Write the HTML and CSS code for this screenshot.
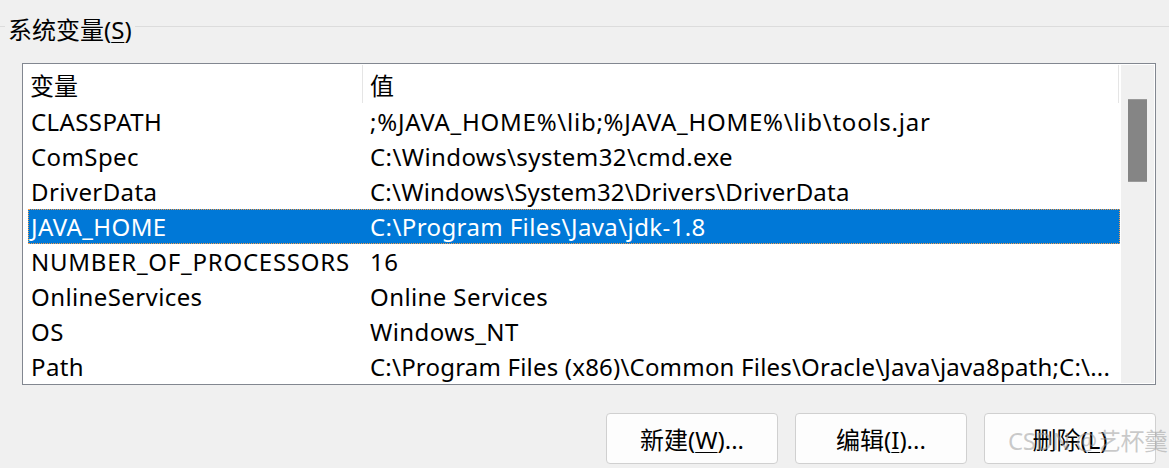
FILE: index.html
```html
<!DOCTYPE html>
<html lang="zh-CN">
<head>
<meta charset="utf-8">
<title>系统变量</title>
<link rel="stylesheet" href="styles.css">
</head>
<body>
<div class="page">
  <div class="group-head">
    <span class="rule rule-short"></span>
    <span class="title">系统变量(<u>S</u>)</span>
    <span class="rule"></span>
  </div>

  <div class="listbox">
    <div class="content">
      <div class="header">
        <div class="hcell hname">变量</div>
        <div class="hcell hvalue">值</div>
      </div>
      <div class="rows">
        <div class="row"><div class="cname">CLASSPATH</div><div class="cvalue wide">;%JAVA_HOME%\lib;%JAVA_HOME%\lib\tools.jar</div></div>
        <div class="row"><div class="cname">ComSpec</div><div class="cvalue">C:\Windows\system32\cmd.exe</div></div>
        <div class="row"><div class="cname">DriverData</div><div class="cvalue tight">C:\Windows\System32\Drivers\DriverData</div></div>
        <div class="row selected"><div class="cname">JAVA_HOME</div><div class="cvalue">C:\Program Files\Java\jdk-1.8</div></div>
        <div class="row"><div class="cname wide">NUMBER_OF_PROCESSORS</div><div class="cvalue">16</div></div>
        <div class="row"><div class="cname">OnlineServices</div><div class="cvalue">Online Services</div></div>
        <div class="row"><div class="cname">OS</div><div class="cvalue">Windows_NT</div></div>
        <div class="row"><div class="cname">Path</div><div class="cvalue tight">C:\Program Files (x86)\Common Files\Oracle\Java\java8path;C:\...</div></div>
      </div>
    </div>
    <div class="scrollbar"><div class="thumb"></div></div>
  </div>

  <div class="buttons">
    <button class="btn">新建(<u>W</u>)...</button>
    <button class="btn">编辑(<u>I</u>)...</button>
    <button class="btn">删除(<u>L</u>)</button>
  </div>

  <div class="watermark">CSDN @艺杯羹</div>
</div>
</body>
</html>
```

FILE: styles.css
```css
html, body {
  margin: 0;
  padding: 0;
  background: #f0f0f0;
}

.page {
  position: relative;
  width: 1169px;
  height: 468px;
  overflow: hidden;
  font-family: "Noto Sans", "Noto Sans CJK SC", sans-serif;
  font-size: 24px;
  letter-spacing: 0.4px;
  color: #000;
}

u {
  text-decoration: underline;
  text-underline-offset: 3px;
  text-decoration-thickness: 1px;
}

.group-head {
  display: flex;
  align-items: flex-start;
  height: 63px;
}

.rule {
  flex: 1;
  height: 1px;
  margin-top: 26px;
  background: #dcdcdc;
}

.rule-short {
  flex: 0 0 5px;
}

.title {
  margin-top: 13px;
  padding: 0 3px;
  line-height: 34px;
  letter-spacing: 0;
  white-space: nowrap;
}

.listbox {
  display: flex;
  margin-left: 22px;
  width: 1132px;
  height: 320px;
  border: 1px solid #828790;
  background: #fff;
  overflow: hidden;
}

.content {
  flex: 1;
  min-width: 0;
  display: flex;
  flex-direction: column;
}

.header {
  display: flex;
  height: 40px;
  flex: 0 0 40px;
}

.hcell {
  display: flex;
  align-items: center;
  padding-left: 7px;
  white-space: nowrap;
  border-right: 1px solid #e5e5e5;
  margin: 1px 0;
  letter-spacing: 0;
}

.hname {
  width: 332px;
}

.hvalue {
  width: 748px;
}

.rows {
  display: flex;
  flex-direction: column;
  padding-left: 5px;
}

.row {
  display: flex;
  align-items: center;
  height: 35px;
  flex: 0 0 35px;
  white-space: nowrap;
  box-sizing: border-box;
}

.row.selected {
  background: #0078d7;
  color: #fff;
  outline: 1px dotted #f59c4a;
  outline-offset: -1px;
}

.cname {
  width: 331px;
  padding-left: 3px;
  overflow: hidden;
}

.cvalue {
  flex: 1;
  min-width: 0;
  padding-left: 8px;
  overflow: hidden;
}

.wide {
  letter-spacing: 0.75px;
}

.tight {
  letter-spacing: 0.2px;
}

.scrollbar {
  flex: 0 0 33px;
  margin: 1px;
  background: #f0f0f0;
  padding-top: 34px;
  box-sizing: border-box;
}

.thumb {
  width: 19px;
  height: 83px;
  margin-left: 7px;
  background: #858585;
  border-top: 1px solid #9a9a9a;
  border-bottom: 1px solid #9a9a9a;
  box-sizing: border-box;
}

.buttons {
  display: flex;
  justify-content: flex-end;
  gap: 17px;
  margin-top: 28px;
  width: 1156px;
}

.btn {
  width: 172px;
  height: 51px;
  background: #fdfdfd;
  border: 1px solid #d0d0d0;
  border-radius: 4px;
  font-family: "Noto Sans", "Noto Sans CJK SC", sans-serif;
  font-size: 24px;
  color: #000;
  padding: 0;
}

.watermark {
  position: absolute;
  left: 1008px;
  top: 422px;
  font-family: "Noto Sans", "Noto Sans CJK SC", sans-serif;
  font-size: 24px;
  letter-spacing: -0.5px;
  color: rgba(150, 150, 150, 0.5);
  white-space: nowrap;
  pointer-events: none;
}
```
